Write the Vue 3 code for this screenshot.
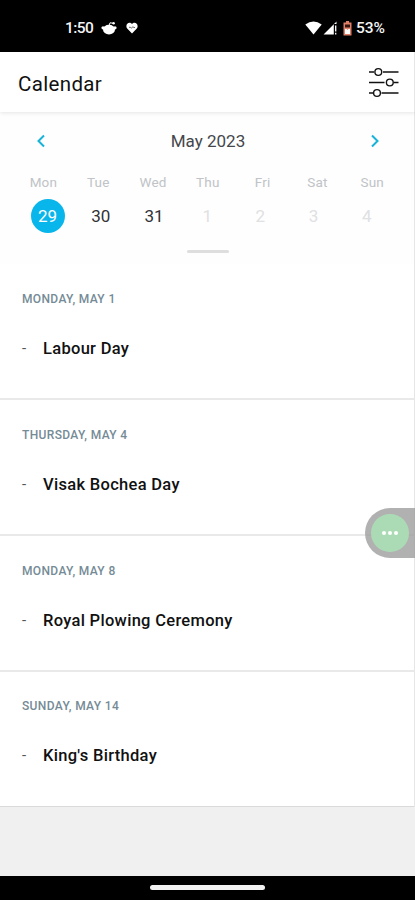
<script setup>
const weekdays = ['Mon', 'Tue', 'Wed', 'Thu', 'Fri', 'Sat', 'Sun']
const days = [
  { n: 29, state: 'selected' },
  { n: 30, state: '' },
  { n: 31, state: '' },
  { n: 1, state: 'muted' },
  { n: 2, state: 'muted' },
  { n: 3, state: 'muted' },
  { n: 4, state: 'muted' },
]
const events = [
  { date: 'MONDAY, MAY 1', title: 'Labour Day' },
  { date: 'THURSDAY, MAY 4', title: 'Visak Bochea Day' },
  { date: 'MONDAY, MAY 8', title: 'Royal Plowing Ceremony' },
  { date: 'SUNDAY, MAY 14', title: "King's Birthday" },
]
</script>

<template>
  <div class="screen">
    <div class="status">
      <span class="clock">1:50</span>
      <svg class="reddit" width="16" height="14" viewBox="0 0 16 14">
        <ellipse cx="8" cy="8.6" rx="6" ry="4.9" fill="#fff" />
        <circle cx="2" cy="6.8" r="1.6" fill="#fff" />
        <circle cx="14" cy="6.8" r="1.6" fill="#fff" />
        <path d="M8 4.5 9 1.8 12 2.2" fill="none" stroke="#fff" stroke-width="1" />
        <circle cx="12.6" cy="2.2" r="1.2" fill="#fff" />
      </svg>
      <svg class="heart" width="12" height="12" viewBox="0 0 12 12">
        <path d="M6 11.5 1.2 6.5C-.8 3.8 1.2.7 3.5.7 4.7.7 5.5 1.3 6 2.1 6.5 1.3 7.3.7 8.5.7c2.3 0 4.3 3.1 2.3 5.8Z" fill="#fff" />
        <path d="M3 5.300h1.500l1 1 1.300-1.700 1 .9H9" fill="none" stroke="#444" stroke-width=".8" />
      </svg>
      <span class="grow"></span>
      <svg width="17" height="14" viewBox="0 0 17 14">
        <path d="M.3 3.500Q8.500-2.500 16.700 3.500L8.500 13.500Z" fill="#fff" />
      </svg>
      <svg class="signal" width="15" height="14" viewBox="0 0 15 14">
        <path d="M.5 13.500 13.500.5V3H10.800V13.500Z" fill="#fff" />
        <path d="M12.700 4.500v6M12.700 11.800v1.700" stroke="#fff" stroke-width="1.300" />
      </svg>
      <svg class="battery" width="9" height="15" viewBox="0 0 9 15">
        <path d="M3 0h3v1.500h2.500V14.500H.5V1.500H3Z" fill="#e08068" />
        <path d="M2 3.500h5v3H2Z" fill="#351611" />
        <path d="M2 8h1.500l1 1 1-1H7v5H2Z" fill="#fff" />
      </svg>
      <span class="percent">53%</span>
    </div>

    <header class="header">
      <h1>Calendar</h1>
      <svg width="30" height="32" viewBox="0 0 30 32" fill="none" stroke="#111" stroke-width="1.700">
        <path d="M0 5H5M14 5H29.500M0 15.500H15.500M24.500 15.500H29.500M0 26H4M12.500 26H29.500" />
        <g stroke-width="1.400">
          <circle cx="9.300" cy="5" r="3.400" />
          <circle cx="20.800" cy="15.500" r="3.400" />
          <circle cx="8" cy="26" r="3.400" />
        </g>
      </svg>
    </header>

    <section class="calendar">
      <div class="month">
        <svg width="10" height="14" viewBox="0 0 10 14"><path d="M8 1.500 2.500 7 8 12.500" /></svg>
        <span>May 2023</span>
        <svg width="10" height="14" viewBox="0 0 10 14"><path d="M2 1.500 7.500 7 2 12.500" /></svg>
      </div>
      <div class="weekdays"><span v-for="w in weekdays" :key="w">{{ w }}</span></div>
      <div class="days">
        <span v-for="d in days" :key="d.n" class="day" :class="d.state"><b>{{ d.n }}</b></span>
      </div>
      <div class="handle"></div>
    </section>

    <main class="events">
      <article v-for="e in events" :key="e.date" class="event">
        <div class="date">{{ e.date }}</div>
        <div class="row"><span class="dash">-</span><span class="title">{{ e.title }}</span></div>
      </article>
    </main>

    <div class="bottom"></div>
    <div class="nav"><div class="pill"></div></div>

    <div class="floating">
      <div class="bubble"><i></i><i></i><i></i></div>
    </div>
  </div>
</template>

<style>
body { background: #fff; }
</style>

<style scoped>
.screen { position: relative; width: 415px; height: 900px; overflow: hidden; display: flex; flex-direction: column; background: #fff; font-family: Roboto, sans-serif; color: #111; }
.screen *, .screen { box-sizing: border-box; }
.screen > * { flex-shrink: 0; }
svg { display: block; flex: none; }
.status { height: 52px; background: #000; color: #f4f4f4; display: flex; align-items: center; padding: 4px 28px 0 65px; font-size: 15.500px; font-weight: 500; }
.clock { width: 36px; letter-spacing: -.6px; }
.heart { margin-left: 9px; }
.grow { flex: 1; }
.signal { margin-left: 1px; }
.battery { margin: 0 4px 0 5px; }
.percent { width: 31px; white-space: nowrap; }
.header { position: relative; height: 60px; display: flex; align-items: center; justify-content: space-between; padding: 2px 15px 0 18px; border-right: 1px solid #e6e6e6; background: #fff; box-shadow: 0 1px 4px rgba(0, 0, 0, .1); }
h1 { margin: 0; padding-top: 1px; font-size: 20.500px; font-weight: 400; letter-spacing: .35px; line-height: 24px; }
.calendar { height: 152px; padding-top: 19px; border-right: 1px solid #e6e6e6; background: #fefefe; }
.month { height: 20px; display: flex; align-items: center; justify-content: space-between; padding: 0 34px 0 36px; font-size: 17px; color: #44474b; }
.month path { fill: none; stroke: #17b3d9; stroke-width: 2; }
.weekdays { display: grid; grid-template-columns: repeat(7, 54.8px); margin: 22px 0 0 16px; height: 18px; line-height: 18px; text-align: center; font-size: 13.500px; color: #c0c3c7; letter-spacing: .2px; }
.days { display: grid; grid-template-columns: repeat(7, 53.2px); margin: 6px 0 0 21px; height: 37px; }
.day { display: flex; align-items: center; justify-content: center; font-size: 17px; color: #303236; }
.day b { width: 34px; height: 34px; line-height: 34px; text-align: center; font-weight: 400; border-radius: 50%; }
.selected b { background: #08b6ec; color: #fff; }
.muted { color: #dfe1e3; }
.handle { width: 42px; height: 3px; margin: 16px 0 0 187px; background: #dedede; border-radius: 2px; }
.events { border-right: 1px solid #e6e6e6; }
.event { height: 136px; padding: 27px 22px 0; border-bottom: 2px solid #e9e9e9; }
.event:last-child { height: 135px; padding-top: 26px; border-bottom: 1px solid #dadada; }
.date { height: 16px; line-height: 16px; font-size: 12px; font-weight: 500; letter-spacing: .35px; color: #758b96; }
.row { display: flex; height: 22px; margin-top: 31px; line-height: 22px; }
.dash { width: 21px; line-height: 20px; color: #555; font-size: 15px; }
.title { font-size: 16.500px; letter-spacing: .3px; font-weight: 500; white-space: nowrap; }
.bottom { height: 69px; background: #f0f0f0; }
.nav { flex: 1; background: #000; display: flex; justify-content: center; padding-top: 9px; }
.pill { width: 115px; height: 5px; border-radius: 3px; background: #f2f2f2; }
.floating { position: absolute; right: 0; top: 508px; width: 50px; height: 50px; padding: 6px; border-radius: 25px 0 0 25px; background: rgba(157, 157, 157, .8); }
.bubble { width: 38px; height: 38px; border-radius: 50%; background: rgba(171, 224, 182, .9); display: flex; align-items: center; justify-content: center; gap: 2px; }
.bubble i { width: 4px; height: 4px; border-radius: 50%; background: #fff; }
</style>
